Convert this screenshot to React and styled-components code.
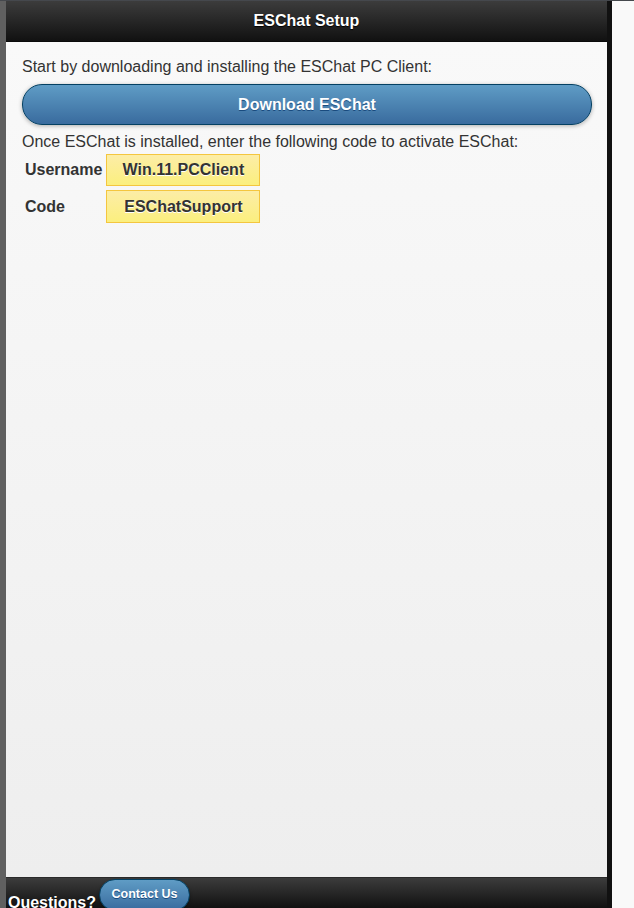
import React from "react";
import styled, { createGlobalStyle } from "styled-components";

const Global = createGlobalStyle`
  html, body { margin: 0; padding: 0; }
  body {
    background: #f9f9f9;
    font-family: "Liberation Sans", Arial, Helvetica, sans-serif;
    font-size: 16px;
    color: #333;
  }
`;

const Viewport = styled.div`
  height: 100vh;
  overflow: hidden;
  display: flex;
  flex-direction: column;
`;

const TopLine = styled.div`
  height: 1px;
  flex: none;
  background: #45484d;
`;

const Frame = styled.div`
  flex: 1;
  min-height: 0;
  display: flex;
`;

const LeftRail = styled.div`
  width: 6px;
  flex: none;
  background: #606060;
`;

const RightRail = styled.div`
  width: 5px;
  flex: none;
  background: #111;
`;

const Page = styled.div`
  width: 601px;
  flex: none;
  display: flex;
  flex-direction: column;
`;

const Bar = styled.div`
  background: linear-gradient(#3c3c3c, #111);
  color: #fff;
  font-weight: bold;
  text-shadow: 0 1px 1px #000;
`;

const Header = styled(Bar)`
  padding: 11px 0 11px;
  border-bottom: 1px solid #0a0a0a;
  text-align: center;
  line-height: 18px;
`;

const Content = styled.div`
  flex: 1;
  min-height: 0;
  padding: 16px 15px 15px 16px;
  background: linear-gradient(#f9f9f9, #eeeeee);
  line-height: 18px;
`;

const Para = styled.p`
  margin: 0;
`;

const BlueButton = styled.a`
  display: flex;
  align-items: center;
  justify-content: center;
  box-sizing: border-box;
  border: 1px solid #044062;
  background: linear-gradient(#5f9cc5, #396b9e);
  color: #fff;
  font-weight: bold;
  text-shadow: 0 1px 0 #194b7e;
  text-decoration: none;
  box-shadow: 0 1px 4px rgba(0, 0, 0, 0.3);
`;

const DownloadButton = styled(BlueButton)`
  height: 41px;
  margin: 8px 0;
  border-radius: 20px;
  font-size: 16px;
`;

const Creds = styled.div`
  display: grid;
  grid-template-columns: auto 154px;
  column-gap: 4px;
  row-gap: 4px;
  margin-top: 3px;
  padding-left: 3px;
  justify-content: start;
  align-items: center;
`;

const Label = styled.div`
  font-weight: bold;
`;

const Value = styled.div`
  box-sizing: border-box;
  height: ${(p) => p.$h}px;
  display: flex;
  align-items: center;
  justify-content: center;
  border: 1px solid #f4c63f;
  background: linear-gradient(#fceda7, #fbef7e);
  font-weight: bold;
  color: #333;
  text-shadow: 0 1px 0 #fff;
`;

const Footer = styled(Bar)`
  height: 31px;
  flex: none;
  box-sizing: border-box;
  border-top: 1px solid #2a2a2a;
  display: flex;
  align-items: flex-start;
  padding-left: 2px;
  gap: 3px;
`;

const Question = styled.span`
  margin-top: 16px;
  line-height: 18px;
  font-size: 16px;
`;

const ContactButton = styled(BlueButton)`
  margin-top: 1px;
  height: 32px;
  padding: 7px 11.5px 3px;
  align-items: flex-start;
  border-radius: 16px;
  font-size: 12.5px;
  line-height: 14px;
  box-shadow: 0 1px 3px rgba(0, 0, 0, 0.3);
`;

const Rest = styled.div`
  flex: 1;
  background: #f9f9f9;
`;

export default function App() {
  return (
    <>
      <Global />
      <Viewport>
        <TopLine />
        <Frame>
          <LeftRail />
          <Page>
            <Header>ESChat Setup</Header>
            <Content>
              <Para>Start by downloading and installing the ESChat PC Client:</Para>
              <DownloadButton href="#">Download ESChat</DownloadButton>
              <Para>Once ESChat is installed, enter the following code to activate ESChat:</Para>
              <Creds>
                <Label>Username</Label>
                <Value $h={32}>Win.11.PCClient</Value>
                <Label>Code</Label>
                <Value $h={33}>ESChatSupport</Value>
              </Creds>
            </Content>
            <Footer>
              <Question>Questions?</Question>
              <ContactButton href="#">Contact Us</ContactButton>
            </Footer>
          </Page>
          <RightRail />
          <Rest />
        </Frame>
      </Viewport>
    </>
  );
}
